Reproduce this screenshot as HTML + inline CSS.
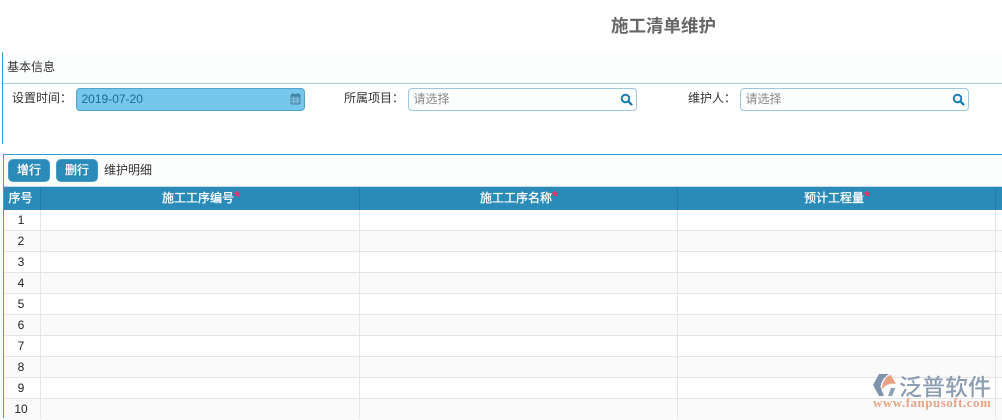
<!DOCTYPE html>
<html><head><meta charset="utf-8">
<style>
*{box-sizing:border-box;margin:0;padding:0}
html,body{width:1002px;height:418px;overflow:hidden;background:#fff;font-family:"Liberation Sans","Noto Sans CJK SC",sans-serif;font-size:12px;color:#333}
.a{position:absolute;white-space:nowrap}
.inp{position:absolute;top:88px;height:23px;width:229px;border:1px solid #9cc6e2;border-radius:4px;background:#fcfdfd;color:#888;line-height:21px;padding-left:4.5px;font-size:12px}
.inp svg{position:absolute;right:3px;top:4px}
.lb{top:90px;line-height:16px;color:#333}
.btn{position:absolute;top:159px;width:42px;height:23px;background:#2a8ab8;border:1px solid #4a9cc4;border-radius:5px;color:#fff;text-align:center;line-height:21px;font-size:12px;-webkit-text-stroke:.3px #fff}
.hc{position:absolute;top:187px;height:23px;line-height:22px;text-align:center;color:#fff;font-size:12px;-webkit-text-stroke:.3px #fff}
.st{position:absolute;top:189px;line-height:16px;color:#ff2a5c;font-size:15px;font-weight:bold}
.v{position:absolute;top:187px;width:1px;height:231px;background:#e5e5e5}
.hv{position:absolute;top:187px;width:1px;height:23px;background:#237ca8}
.r{position:absolute;left:4px;right:0;height:21px;border-bottom:1px solid #e5e5e5}
.n{position:absolute;left:4px;width:34px;text-align:center;font-size:12px;color:#222;line-height:20px;height:20px}
</style></head><body>
<div class="a" style="left:611px;top:15px;font-size:17.5px;font-weight:bold;color:#666;line-height:22px">施工清单维护</div>

<div class="a" style="left:2px;top:52px;width:1000px;height:31px;background:#fcfdfd"></div>
<div class="a" style="left:2px;top:52px;width:1px;height:92px;background:#29a0d4"></div>
<div class="a" style="left:3px;top:83px;width:999px;height:1px;background:#a5c9dd"></div>
<div class="a" style="left:7px;top:59px;line-height:16px;color:#333">基本信息</div>

<div class="a lb" style="left:12px">设置时间：</div>
<div class="inp" style="left:76px;background:#77c7ec;border-color:#4ea4cc;color:#1a6a98;font-size:12px">2019-07-20
<svg width="11" height="13" viewBox="0 0 11 13" style="right:3px;top:3px"><rect x="1" y="2.5" width="9" height="9.5" rx="1" fill="#5d9cbc" stroke="#3f86aa"/><rect x="1" y="2.5" width="9" height="2" fill="#3f86aa"/><path d="M3 1v2M8 1v2" stroke="#3f86aa" stroke-width="1.2"/><path d="M1 7h9M1 9.5h9M3.700 5v7M7.300 5v7" stroke="#8cc9e6" stroke-width=".7"/></svg></div>

<div class="a lb" style="left:344px">所属项目：</div>
<div class="inp" style="left:408px">请选择
<svg width="13" height="13" viewBox="0 0 13 13"><circle cx="5.500" cy="5.500" r="3.800" fill="none" stroke="#1277b0" stroke-width="1.800"/><path d="M8.500 8.500l3 3" stroke="#1277b0" stroke-width="2.200" stroke-linecap="round"/></svg></div>

<div class="a lb" style="left:688px">维护人：</div>
<div class="inp" style="left:740px">请选择
<svg width="13" height="13" viewBox="0 0 13 13"><circle cx="5.500" cy="5.500" r="3.800" fill="none" stroke="#1277b0" stroke-width="1.800"/><path d="M8.500 8.500l3 3" stroke="#1277b0" stroke-width="2.200" stroke-linecap="round"/></svg></div>

<div class="a" style="left:3px;top:154px;width:999px;height:1px;background:#29a0d4"></div>
<div class="a" style="left:3px;top:155px;width:999px;height:31px;background:#fcfdfd"></div>
<div class="a" style="left:3px;top:154px;width:1px;height:264px;background:#3d9cc8"></div>
<div class="btn" style="left:8px">增行</div>
<div class="btn" style="left:56px">删行</div>
<div class="a" style="left:104px;top:162px;line-height:16px;color:#333">维护明细</div>

<div class="a" style="left:4px;top:186px;width:998px;height:1px;background:#c5d9e4"></div>
<div class="a" style="left:4px;top:187px;width:998px;height:23px;background:#2a8ab8"></div>

<div class="r" style="top:210px;background:#fff"></div>
<div class="r" style="top:231px;background:#fafafa"></div>
<div class="r" style="top:252px;background:#fff"></div>
<div class="r" style="top:273px;background:#fafafa"></div>
<div class="r" style="top:294px;background:#fff"></div>
<div class="r" style="top:315px;background:#fafafa"></div>
<div class="r" style="top:336px;background:#fff"></div>
<div class="r" style="top:357px;background:#fafafa"></div>
<div class="r" style="top:378px;background:#fff"></div>
<div class="r" style="top:399px;background:#fafafa;border-bottom:0"></div>

<div class="v" style="left:40px"></div>
<div class="v" style="left:359px"></div>
<div class="v" style="left:677px"></div>
<div class="v" style="left:995px"></div>
<div class="hv" style="left:40px"></div>
<div class="hv" style="left:359px"></div>
<div class="hv" style="left:677px"></div>
<div class="hv" style="left:995px"></div>

<div class="hc" style="left:4px;width:33px">序号</div>
<div class="hc" style="left:41px;width:314px">施工工序编号</div><div class="st" style="left:234px">*</div>
<div class="hc" style="left:360px;width:312px">施工工序名称</div><div class="st" style="left:552px">*</div>
<div class="hc" style="left:678px;width:312px">预计工程量</div><div class="st" style="left:864px">*</div>

<div class="n" style="top:210px">1</div>
<div class="n" style="top:231px">2</div>
<div class="n" style="top:252px">3</div>
<div class="n" style="top:273px">4</div>
<div class="n" style="top:294px">5</div>
<div class="n" style="top:315px">6</div>
<div class="n" style="top:336px">7</div>
<div class="n" style="top:357px">8</div>
<div class="n" style="top:378px">9</div>
<div class="n" style="top:399px">10</div>

<svg class="a" style="left:872px;top:373px" width="26" height="25" viewBox="0 0 26 25"><path d="M7 1H17Q10 5 8.500 14L12 23H7L1 12Z" fill="#7f93ad"/><path d="M9.500 17Q11 4 19 2L24 11Q15 9 9.500 17Z" fill="#e8a283"/><path d="M16 23L19 15H23.500L20 23Z" fill="#8fa1b8"/></svg>
<div class="a" style="left:899px;top:371px;font-size:23px;line-height:28px;color:#8c9db3;font-weight:500;letter-spacing:0;font-family:'Noto Sans CJK SC',sans-serif">泛普软件</div>
<div class="a" style="left:873px;top:396px;font-size:13px;line-height:14px;color:#e6a486;font-weight:bold;font-family:'Liberation Serif',serif;letter-spacing:.5px">www.fanpusoft.com</div>
</body></html>
